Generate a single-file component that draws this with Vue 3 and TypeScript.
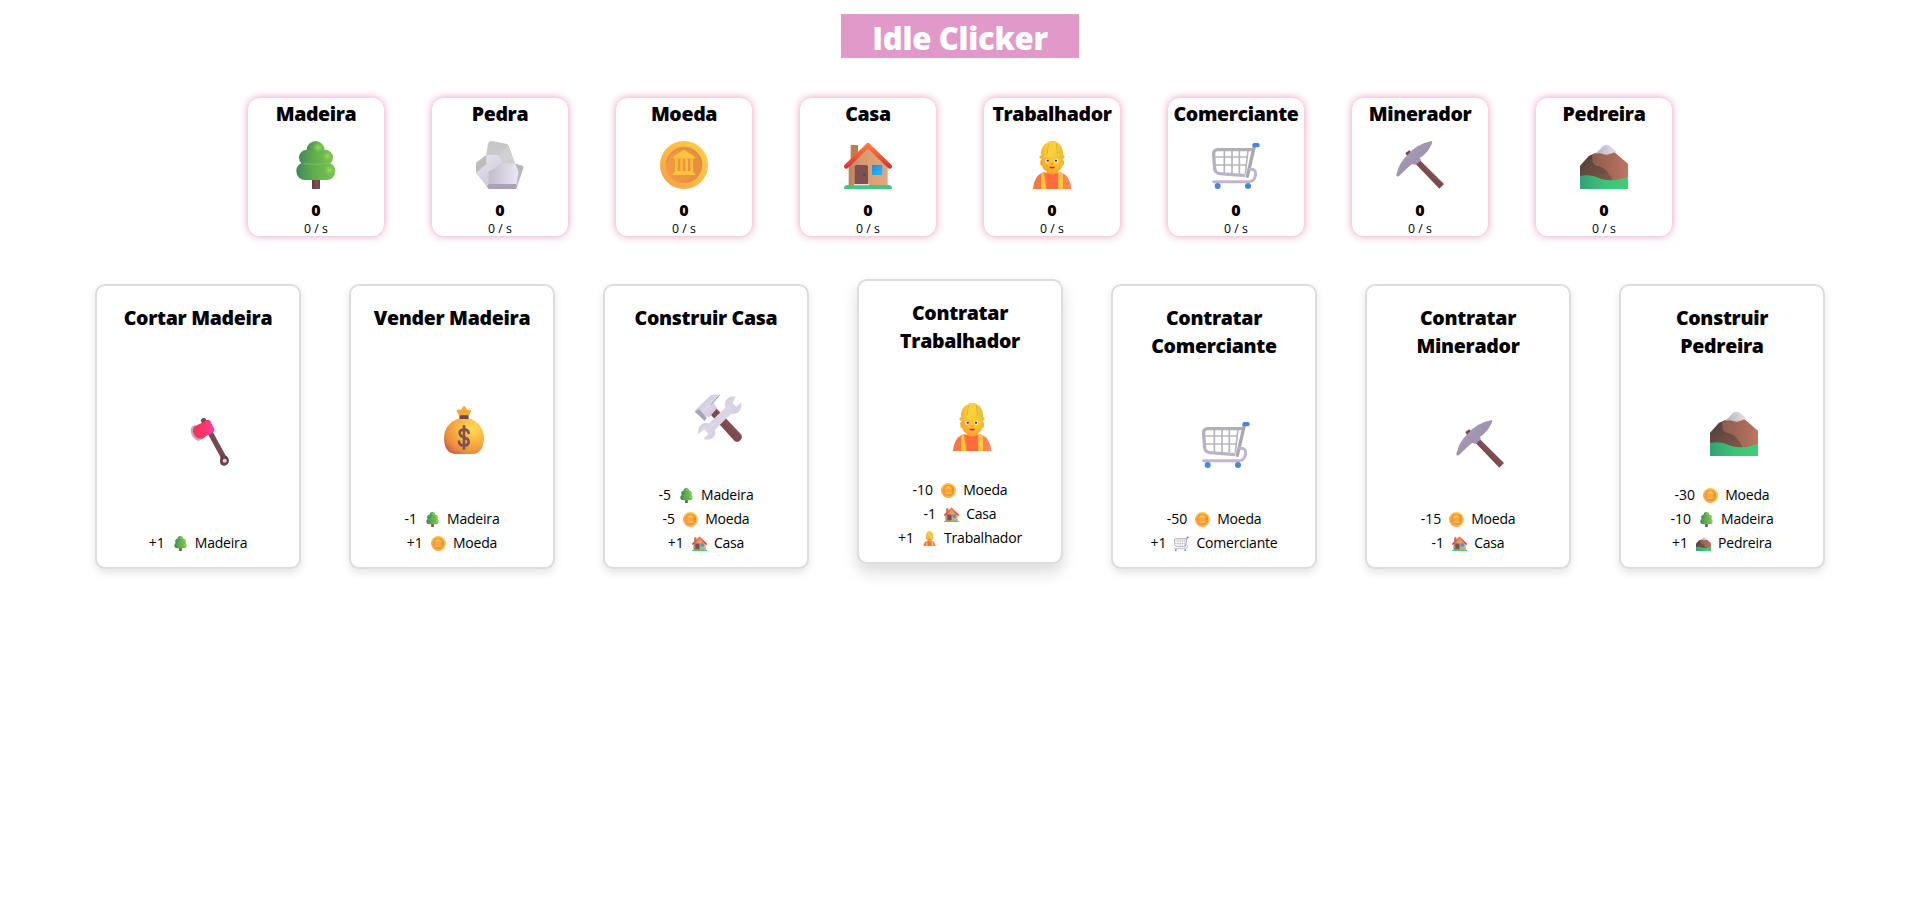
<script setup lang="ts">
import { ref } from 'vue'

interface Res { id: string; name: string; glow: string }
interface Cost { n: string; id: string; name: string }
interface Action { title: string[]; icon: string; costs: Cost[]; active?: boolean }

const resources = ref<Res[]>([
  { id: 'tree', name: 'Madeira', glow: 'lilac' },
  { id: 'rock', name: 'Pedra', glow: 'lilac' },
  { id: 'coin', name: 'Moeda', glow: 'rose' },
  { id: 'house', name: 'Casa', glow: 'rose' },
  { id: 'worker', name: 'Trabalhador', glow: 'rose' },
  { id: 'cart', name: 'Comerciante', glow: 'rose' },
  { id: 'pick', name: 'Minerador', glow: 'rose' },
  { id: 'mountain', name: 'Pedreira', glow: 'lilac' },
])

const wood = (n: string): Cost => ({ n, id: 'tree', name: 'Madeira' })
const coin = (n: string): Cost => ({ n, id: 'coin', name: 'Moeda' })
const house = (n: string): Cost => ({ n, id: 'house', name: 'Casa' })

const actions = ref<Action[]>([
  { title: ['Cortar Madeira'], icon: 'axe', costs: [wood('+1')] },
  { title: ['Vender Madeira'], icon: 'bag', costs: [wood('-1'), coin('+1')] },
  { title: ['Construir Casa'], icon: 'tools', costs: [wood('-5'), coin('-5'), house('+1')] },
  { title: ['Contratar', 'Trabalhador'], icon: 'worker', active: true, costs: [coin('-10'), house('-1'), { n: '+1', id: 'worker', name: 'Trabalhador' }] },
  { title: ['Contratar', 'Comerciante'], icon: 'cart', costs: [coin('-50'), { n: '+1', id: 'cart', name: 'Comerciante' }] },
  { title: ['Contratar', 'Minerador'], icon: 'pick', costs: [coin('-15'), house('-1')] },
  { title: ['Construir', 'Pedreira'], icon: 'mountain', costs: [coin('-30'), wood('-10'), { n: '+1', id: 'mountain', name: 'Pedreira' }] },
])
</script>

<template>
  <svg class="defs" width="0" height="0" aria-hidden="true">
    <defs>
      <linearGradient id="gLeaf"><stop offset="0" stop-color="#42865a" /><stop offset=".45" stop-color="#5fae4c" /><stop offset="1" stop-color="#7cc44f" /></linearGradient>
      <radialGradient id="gLeafHi"><stop offset="0" stop-color="#98dc62" /><stop offset="1" stop-color="#7cc44f" stop-opacity="0" /></radialGradient>
      <linearGradient id="gTrunk"><stop offset="0" stop-color="#5c3b46" /><stop offset=".6" stop-color="#7d5252" /><stop offset="1" stop-color="#694249" /></linearGradient>
      <linearGradient id="gRockA" x2="0" y2="1"><stop offset="0" stop-color="#c5c5c5" /><stop offset="1" stop-color="#d6d6d8" /></linearGradient>
      <linearGradient id="gRockB" x2=".6" y2="1"><stop offset="0" stop-color="#e8e4f0" /><stop offset="1" stop-color="#cfc9d8" /></linearGradient>
      <linearGradient id="gRockC" x1="0" x2="1"><stop offset="0" stop-color="#c3bccb" /><stop offset="1" stop-color="#ece8f3" /></linearGradient>
      <linearGradient id="gCoin" x1="1" y1="0" x2="0" y2="1"><stop offset="0" stop-color="#ffd045" /><stop offset=".6" stop-color="#fcb544" /><stop offset="1" stop-color="#f59a55" /></linearGradient>
      <linearGradient id="gCoinIn"><stop offset="0" stop-color="#f49b43" /><stop offset="1" stop-color="#e28f3c" /></linearGradient>
      <linearGradient id="gWall" x1="0" x2="1"><stop offset="0" stop-color="#b9805c" /><stop offset=".3" stop-color="#d69a6f" /><stop offset="1" stop-color="#e0a97c" /></linearGradient>
      <linearGradient id="gRoof" x2="0" y2="1"><stop offset="0" stop-color="#ff7a3c" /><stop offset="1" stop-color="#dc3535" /></linearGradient>
      <linearGradient id="gWin" x2="1" y2="1"><stop offset="0" stop-color="#1f8ae0" /><stop offset="1" stop-color="#36b4fb" /></linearGradient>
      <linearGradient id="gGrass"><stop offset="0" stop-color="#35a176" /><stop offset=".5" stop-color="#3cc377" /><stop offset="1" stop-color="#3fcf77" /></linearGradient>
      <linearGradient id="gHat"><stop offset="0" stop-color="#eeae35" /><stop offset=".4" stop-color="#fbd33c" /><stop offset="1" stop-color="#e7bd35" /></linearGradient>
      <radialGradient id="gFace" cx=".65" cy=".35" r=".75"><stop offset="0" stop-color="#ffd02e" /><stop offset="1" stop-color="#f7a02c" /></radialGradient>
      <linearGradient id="gShirt"><stop offset="0" stop-color="#ef7846" /><stop offset=".5" stop-color="#ff7a42" /><stop offset="1" stop-color="#fb8a5a" /></linearGradient>
      <linearGradient id="gCart" x2="0" y2="1"><stop offset="0" stop-color="#b1afb5" /><stop offset="1" stop-color="#bdb3c9" /></linearGradient>
      <linearGradient id="gWood" x1="0" y1="1" x2="1" y2="0"><stop offset="0" stop-color="#6a3054" /><stop offset=".5" stop-color="#7e4c50" /><stop offset="1" stop-color="#96665c" /></linearGradient>
      <linearGradient id="gSteel" x1="0" y1="0" x2="1" y2="1"><stop offset="0" stop-color="#a89fb3" /><stop offset="1" stop-color="#9a89ae" /></linearGradient>
      <linearGradient id="gMtL" x2="1" y2=".8"><stop offset="0" stop-color="#4d3b38" /><stop offset="1" stop-color="#8a5d4f" /></linearGradient>
      <linearGradient id="gMtR"><stop offset="0" stop-color="#8d5e50" /><stop offset=".6" stop-color="#a96a57" /><stop offset="1" stop-color="#bd7764" /></linearGradient>
      <linearGradient id="gSnow"><stop offset="0" stop-color="#b5b2b8" /><stop offset="1" stop-color="#e8e3ee" /></linearGradient>
      <linearGradient id="gAxe"><stop offset="0" stop-color="#f4374f" /><stop offset=".5" stop-color="#fb3468" /><stop offset="1" stop-color="#ff42a0" /></linearGradient>
      <radialGradient id="gBag" cx=".72" cy=".28" r=".85"><stop offset="0" stop-color="#ffdc58" /><stop offset=".45" stop-color="#f8b53f" /><stop offset=".8" stop-color="#ec8f3e" /><stop offset="1" stop-color="#cf6048" /></radialGradient>
      <linearGradient id="gMetal" x2="1" y2="1"><stop offset="0" stop-color="#c3bed0" /><stop offset=".5" stop-color="#dcd6e6" /><stop offset="1" stop-color="#c9b5de" /></linearGradient>
    </defs>
    <symbol id="tree" viewBox="0 0 144 144">
      <rect x="60" y="108" width="24" height="36" rx="2" fill="url(#gTrunk)" />
      <circle cx="71" cy="27" r="27" fill="url(#gLeaf)" />
      <rect x="21" y="26" width="102" height="48" rx="24" fill="url(#gLeaf)" />
      <rect x="13" y="64" width="117" height="53" rx="26" fill="url(#gLeaf)" />
      <path d="M32 68q40 5 82-1" stroke="#8bcf5c" stroke-width="3" fill="none" opacity=".6" />
      <circle cx="78" cy="20" r="16" fill="url(#gLeafHi)" /><circle cx="106" cy="46" r="16" fill="url(#gLeafHi)" /><circle cx="112" cy="87" r="18" fill="url(#gLeafHi)" />
    </symbol>
    <symbol id="rock" viewBox="0 0 144 144">
      <path d="M36 9Q38 0 48 0L93 9 98 14 118 68 139 74Q144 77 142 82L124 138 118 144H38L0 95V66L31 42Z" fill="url(#gRockA)" />
      <path d="M0 66L31 42V68L4 94 0 95Z" fill="#bdbdbd" />
      <path d="M31 42H68L82 64 38 92 35 137 0 96 31 70Z" fill="url(#gRockB)" />
      <path d="M68 42L95 14 118 68 82 64Z" fill="#d0cfd1" />
      <path d="M38 92L84 66 118 68 128 92 120 129H38Z" fill="url(#gRockC)" />
      <path d="M118 68L139 74Q144 77 142 82L122 134 128 92Z" fill="#b9b6bd" />
      <path d="M38 129H120L124 138 118 144H38L33 136Z" fill="#aaa2b3" />
    </symbol>
    <symbol id="coin" viewBox="0 0 144 144">
      <circle cx="72" cy="72" r="72" fill="url(#gCoin)" />
      <circle cx="72" cy="72" r="55" fill="url(#gCoinIn)" />
      <path d="M18 67a55 55 0 0 1 108 0" stroke="#cf8437" stroke-width="3" fill="none" opacity=".7" />
      <path d="M72 27L104 48V52H40V48Z" fill="#ffc440" stroke="#ffc440" stroke-width="2" stroke-linejoin="round" />
      <path d="M49 53V93M65 53V93M80 53V93M95 53V93" stroke="#fbbb3d" stroke-width="8" />
      <path d="M44 90H100V95H105V102H39V95H44Z" fill="#ffc33f" />
    </symbol>
    <symbol id="house" viewBox="0 0 144 144">
      <rect x="20" y="12" width="22" height="60" rx="2" fill="#b98056" />
      <path d="M14 70L72 20 131 72V134H14Z" fill="url(#gWall)" />
      <path d="M0 144Q0 132 10 132H134Q144 132 144 144Z" fill="#3fc97c" />
      <rect x="30" y="128" width="46" height="5" fill="#e8dfe5" />
      <path d="M32 129V78Q32 72 38 72H66Q72 72 72 78V129Z" fill="#80504e" />
      <circle cx="61" cy="101" r="3" fill="#54353d" />
      <rect x="84" y="72" width="31" height="30" rx="2" fill="url(#gWin)" />
      <path d="M7 76L72 13 137 76" fill="none" stroke="url(#gRoof)" stroke-width="14" stroke-linecap="round" stroke-linejoin="round" />
    </symbol>
    <symbol id="worker" viewBox="0 0 144 144">
      <path d="M15 144Q17 105 47 93L72 100 97 93Q128 105 130 144Z" fill="url(#gShirt)" />
      <path d="M40 99L47 93 55 144H40Z M91 92L105 98V144H91Z" fill="#fcc93b" />
      <rect x="57" y="96" width="32" height="48" fill="#ff6a40" />
      <path d="M55 80H91V93Q73 110 55 93Z" fill="#f59f30" />
      <rect x="37" y="55" width="12" height="20" rx="6" fill="#f3a52f" /><rect x="96" y="55" width="12" height="20" rx="6" fill="#f7b72c" />
      <path d="M41 42H104V68Q101 94 72 95 44 94 41 68Z" fill="url(#gFace)" />
      <circle cx="57" cy="59" r="6" fill="#fff" /><circle cx="85" cy="59" r="6" fill="#fff" /><circle cx="59" cy="59" r="3.5" fill="#563b4d" /><circle cx="84" cy="59" r="3.5" fill="#563b4d" />
      <path d="M70 66Q72 74 77 68" stroke="#ee8e2b" stroke-width="3" fill="none" />
      <path d="M63 77H82Q73 88 63 77Z" fill="#c52f49" />
      <path d="M39 43Q38 12 60 4L65 0H80L86 4Q105 12 106 42L110 46Q111 50 106 53 72 46 39 53 33 52 34 47Z" fill="url(#gHat)" />
      <path d="M62 8L58 37M84 8L88 37" stroke="#dda52f" stroke-width="3" /><path d="M63 3H83L87 36H59Z" fill="#f8cf3d" />
    </symbol>
    <symbol id="cart" viewBox="0 0 144 144">
      <path d="M108 28L100 98M82 28V98M60 28V98M37 28V96M10 48H108M10 72H104" stroke="#b8b5ba" stroke-width="5" fill="none" />
      <path d="M124 26H18Q4 26 5 40L8 84Q10 96 24 98L100 104" stroke="url(#gCart)" stroke-width="10" fill="none" stroke-linejoin="round" />
      <path d="M127 16L106 106" stroke="#aaa8ad" stroke-width="10" stroke-linecap="round" />
      <path d="M113 85Q133 84 131 100 128 122 110 122H5" stroke="#bfb3cd" stroke-width="9" fill="none" stroke-linecap="round" />
      <path d="M6 119H112Q124 118 128 105" stroke="#d1ccd6" stroke-width="3" fill="none" />
      <rect x="121" y="6" width="22" height="13" rx="6" fill="#4286d8" />
      <circle cx="17" cy="135" r="9" fill="#4987d7" /><circle cx="108" cy="135" r="9" fill="#4987d7" />
    </symbol>
    <symbol id="pick" viewBox="0 0 144 144">
      <path d="M28 36L40 28 46 34 34 46Z" fill="#74474d" />
      <path d="M57 67L69 55 144 129 130 143Z" fill="url(#gWood)" />
      <path d="M42 66L68 44 75 58 58 72Z" fill="#a992c3" />
      <path d="M107 0Q111 2 107 9 94 38 70 52 45 70 9 105 2 109 1 103 8 66 34 43 60 9 107 0Z" fill="url(#gSteel)" />
    </symbol>
    <symbol id="mountain" viewBox="0 0 144 144">
      <path d="M0 74L27 44 48 36 100 42 144 72V118L72 124 0 112Z" fill="url(#gMtL)" />
      <path d="M36 44Q40 36 48 35L102 32 144 68V112L100 124Q84 82 57 76 35 72 38 58Z" fill="url(#gMtR)" />
      <path d="M46 39L66 18Q79 5 94 18L113 35Q103 32 96 37 82 44 70 40 58 34 46 39Z" fill="url(#gSnow)" />
      <path d="M0 105Q28 98 62 113 100 125 144 107V144H0Z" fill="url(#gGrass)" />
    </symbol>
    <symbol id="axe" viewBox="0 0 144 144">
      <path d="M53 8L112 116" stroke="#75494d" stroke-width="16" stroke-linecap="round" />
      <path d="M104 110L122 114Q131 123 128 133 123 144 113 143 101 141 102 128Z" fill="#6d424c" />
      <circle cx="116" cy="128" r="6" fill="#d9cede" />
      <path d="M28 21Q14 24 14 38 16 62 38 69L49 62 34 42Z" fill="#b8adc8" />
      <path d="M26 25Q46 17 62 6 68 3 73 9L85 33Q87 40 80 44 60 52 50 62 30 64 23 48 17 35 26 25Z" fill="url(#gAxe)" />
    </symbol>
    <symbol id="bag" viewBox="0 0 144 144">
      <path d="M58 31L50 15Q50 9 64 11 67 2 72 0 77 2 81 11 95 9 93 16L86 31Z" fill="#f4a83c" />
      <path d="M60 36Q12 52 12 98 13 143 49 144H96Q130 143 132 98 132 54 86 36Z" fill="url(#gBag)" />
      <rect x="58" y="28" width="28" height="11" rx="4" fill="#70474b" />
      <path d="M86 81Q84 70 72 70 59 71 59 82 60 90 72 94 86 98 86 108 85 118 72 119 58 119 57 107M72 61V128" fill="none" stroke="#845050" stroke-width="8" stroke-linecap="round" />
    </symbol>
    <symbol id="tools" viewBox="0 0 144 144">
      <path d="M49 61L66 42 141 121Q148 133 136 142 129 146 121 140Z" fill="url(#gWood)" />
      <path d="M2 50L51 3Q60 0 77 3L60 28 69 43 46 70 34 66 33 81 3 54Z" fill="url(#gMetal)" />
      <path d="M3 53L15 45 38 71 32 81Z" fill="#aaa4b5" /><path d="M77 3L50 33" stroke="#aba5b6" stroke-width="3" />
      <path d="M125 8Q106 2 95 20 90 31 94 41L45 88Q29 83 18 95 10 106 13 121L30 106 43 119 29 134Q45 142 58 130 67 120 63 107L111 59Q127 62 137 50 144 41 141 25L127 38 116 26Z" fill="url(#gMetal)" />
    </symbol>
  </svg>

  <main class="page">
    <h1 class="heading">Idle Clicker</h1>

    <section class="resources">
      <article v-for="r in resources" :key="r.id" class="resource" :class="r.glow">
        <h2 class="name">{{ r.name }}</h2>
        <svg class="emoji"><use :href="'#' + r.id" /></svg>
        <strong class="count">0</strong>
        <span class="rate">0 / s</span>
      </article>
    </section>

    <section class="actions">
      <button v-for="a in actions" :key="a.title.join()" type="button" class="action" :class="{ active: a.active }">
        <span class="title"><span v-for="t in a.title" :key="t">{{ t }}</span></span>
        <span class="picture"><svg class="emoji"><use :href="'#' + a.icon" /></svg></span>
        <span class="costs">
          <span v-for="c in a.costs" :key="c.id" class="cost">
            <span class="amount">{{ c.n }}</span><svg class="mini"><use :href="'#' + c.id" /></svg><span>{{ c.name }}</span>
          </span>
        </span>
      </button>
    </section>
  </main>
</template>

<style>
body { margin: 0; background: #fff; }
</style>

<style scoped>
.defs { position: absolute; }
.page {
  box-sizing: border-box;
  display: flex;
  flex-direction: column;
  align-items: center;
  min-height: 915px;
  padding: 14px 0 0 3px;
  color: #000;
  font-family: "Segoe UI", "Open Sans", "Noto Sans", sans-serif;
}
.heading {
  box-sizing: border-box;
  width: 238px;
  height: 44px;
  margin: 0;
  padding-top: 2px;
  background: #e199c9;
  color: #fff;
  font-size: 31px;
  font-weight: 800;
  letter-spacing: -.3px;
  line-height: 44px;
  text-align: center;
  white-space: nowrap;
}
.resources { display: flex; gap: 48px; margin-top: 40px; }
.resource {
  display: flex;
  flex-direction: column;
  align-items: center;
  width: 136px;
  height: 138px;
  border-radius: 12px;
  background: #fff;
  white-space: nowrap;
}
.lilac { box-shadow: 0 0 9px #e199c9; }
.rose { box-shadow: 0 0 9px #e899b5; }
.name { margin: 2px 0 0; font-size: 19.5px; font-weight: 800; letter-spacing: -.36px; line-height: 28px; }
.emoji { display: block; flex: none; width: 48px; height: 48px; }
.resource .emoji { margin-top: 13px; }
.count { margin-top: 10px; font-size: 16px; font-weight: 800; line-height: 22px; }
.rate { font-size: 12.3px; line-height: 15px; }
.actions { display: flex; gap: 48px; margin-top: 48px; }
.action {
  box-sizing: border-box;
  display: flex;
  flex-direction: column;
  align-items: center;
  width: 206px;
  height: 285px;
  padding: 18px 0 12px;
  border: 2px solid #ddd;
  border-radius: 10px;
  background: #fff;
  box-shadow: 0 4px 8px rgba(0, 0, 0, .1);
  color: #000;
  font-family: inherit;
  cursor: pointer;
}
.active { transform: translateY(-5px); box-shadow: 0 8px 16px rgba(0, 0, 0, .15); }
.title { display: flex; flex-direction: column; font-size: 19.5px; font-weight: 800; letter-spacing: -.3px; line-height: 28px; white-space: nowrap; }
.picture { display: flex; flex: 1; align-items: center; padding: 21px 0 0 23px; }
.costs { display: flex; flex-direction: column; align-items: center; }
.cost { display: flex; align-items: center; height: 24px; font-size: 14px; letter-spacing: -.2px; line-height: 24px; white-space: nowrap; }
.amount { letter-spacing: 0; }
.mini { flex: none; width: 15px; height: 15px; margin: 0 7px 0 8px; }
</style>
